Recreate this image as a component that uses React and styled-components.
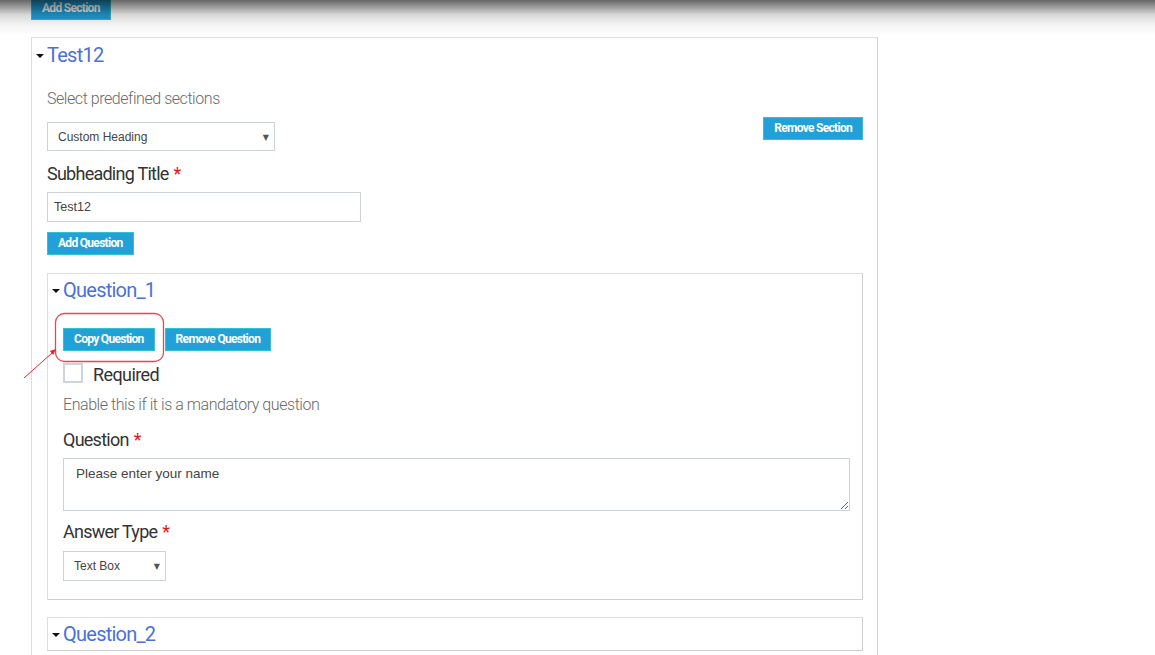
import React from "react";
import styled, { createGlobalStyle } from "styled-components";

const Global = createGlobalStyle`
  html, body { margin: 0; padding: 0; background: #fff; }
  body { font-family: Roboto, "Liberation Sans", sans-serif; color: #333; }
  * { box-sizing: border-box; }
`;

const TopShade = styled.div`
  position: fixed;
  top: 0;
  left: 0;
  right: 0;
  height: 36px;
  pointer-events: none;
  z-index: 10;
  background: linear-gradient(
    to bottom,
    rgba(0, 0, 0, 0.6) 0px,
    rgba(0, 0, 0, 0.42) 6px,
    rgba(0, 0, 0, 0.15) 15px,
    rgba(0, 0, 0, 0.04) 26px,
    rgba(0, 0, 0, 0) 35px
  );
`;

const Page = styled.div`
  margin-top: -3px;
  padding-left: 31px;
  width: 878px;
  display: flex;
  flex-direction: column;
  align-items: flex-start;
`;

const Button = styled.button`
  height: 23px;
  padding: 0 ${(p) => p.$pad || 10}px;
  background: #22a0d8;
  border: 1px solid #34bfd2;
  color: #fff;
  font-family: Roboto, sans-serif;
  font-weight: 700;
  font-size: 12px;
  letter-spacing: -0.7px;
  line-height: 21px;
  cursor: pointer;
  white-space: nowrap;
`;

const Box = styled.div`
  align-self: stretch;
  border: 1px solid #dedede;
  border-right-color: #cfcfcf;
  border-bottom-color: #cfcfcf;
  padding: 0 ${(p) => p.$padRight}px ${(p) => p.$padBottom}px 15px;
  margin-top: ${(p) => p.$top}px;
  display: flex;
  flex-direction: column;
  align-items: flex-start;
`;

const Header = styled.div`
  display: flex;
  align-items: center;
  margin-left: -11px;
  height: ${(p) => p.$h}px;
`;

const Caret = styled.span`
  width: 0;
  height: 0;
  border-left: 4px solid transparent;
  border-right: 4px solid transparent;
  border-top: 4px solid #111;
  margin-right: 3px;
  margin-top: 1px;
`;

const Title = styled.span`
  font-size: 20px;
  line-height: 26px;
  color: #4b6fdb;
  letter-spacing: -0.75px;
`;

const TopRow = styled.div`
  align-self: stretch;
  display: flex;
  justify-content: space-between;
  align-items: flex-start;
  margin-top: 16px;
`;

const Col = styled.div`
  display: flex;
  flex-direction: column;
  align-items: flex-start;
`;

const Hint = styled.div`
  font-size: 16px;
  font-weight: 300;
  line-height: 22px;
  color: #6a6a6a;
  letter-spacing: -0.45px;
  margin-top: ${(p) => p.$top || 0}px;
`;

const Label = styled.div`
  font-size: 18px;
  line-height: 24px;
  color: #333;
  letter-spacing: -0.75px;
  margin-top: ${(p) => p.$top}px;
  span {
    color: #e8141b;
    margin-left: 5px;
  }
`;

const SelectWrap = styled.div`
  position: relative;
  width: ${(p) => p.$w}px;
  margin-top: ${(p) => p.$top}px;
`;

const Select = styled.select`
  appearance: none;
  -webkit-appearance: none;
  display: block;
  width: 100%;
  height: ${(p) => p.$h}px;
  border: 1px solid #cdd1da;
  border-radius: 0;
  background: #fff;
  color: #444;
  font-family: "Liberation Sans", Arial, sans-serif;
  font-size: 12px;
  padding: 0 0 0 10px;
  outline: none;
`;

const Arrow = styled.span`
  position: absolute;
  right: 6px;
  top: 50%;
  transform: translateY(-50%);
  font-size: 8px;
  color: #555;
  pointer-events: none;
  font-family: "DejaVu Sans", sans-serif;
`;

const RemoveSection = styled(Button)`
  margin-top: 29px;
`;

const TextInput = styled.input`
  display: block;
  width: 314px;
  height: 30px;
  margin-top: 6px;
  border: 1px solid #cdd1da;
  padding: 0 6px;
  font-family: "Liberation Sans", Arial, sans-serif;
  font-size: 12.5px;
  color: #444;
  outline: none;
`;

const AddQuestion = styled(Button)`
  margin-top: 10px;
`;

const ButtonRow = styled.div`
  position: relative;
  display: flex;
  gap: 10px;
  margin-top: 22px;
`;

const Annotation = styled.svg`
  position: absolute;
  left: -45px;
  top: -20px;
  overflow: visible;
  pointer-events: none;
`;

const CheckRow = styled.label`
  display: flex;
  align-items: flex-start;
  gap: 10px;
  height: 20px;
  margin-top: 12px;
  font-size: 18px;
  line-height: 20px;
  letter-spacing: -0.6px;
  color: #333;
`;

const CheckText = styled.span`
  padding-top: 2px;
`;

const CheckBoxSquare = styled.span`
  flex: none;
  width: 20px;
  height: 20px;
  border: 2px solid #cfd3db;
  background: #fff;
`;

const TextArea = styled.textarea`
  display: block;
  align-self: stretch;
  height: 53px;
  margin-top: 6px;
  border: 1px solid #cdd1da;
  padding: 7px 12px;
  font-family: "Liberation Sans", Arial, sans-serif;
  font-size: 13.5px;
  color: #444;
  resize: vertical;
  outline: none;
`;

function SelectField({ w, h, top, value }) {
  return (
    <SelectWrap $w={w} $top={top}>
      <Select $h={h} defaultValue={value}>
        <option>{value}</option>
      </Select>
      <Arrow>▼</Arrow>
    </SelectWrap>
  );
}

export default function App() {
  return (
    <>
      <Global />
      <TopShade />
      <Page>
        <Button $pad={10}>Add Section</Button>
        <Box $top={17} $padRight={14} $padBottom={40}>
          <Header $h={34}>
            <Caret />
            <Title>Test12</Title>
          </Header>
          <TopRow>
            <Col>
              <Hint>Select predefined sections</Hint>
              <SelectField w={228} h={29} top={12} value="Custom Heading" />
            </Col>
            <RemoveSection $pad={10}>Remove Section</RemoveSection>
          </TopRow>
          <Label $top={11}>
            Subheading Title<span>*</span>
          </Label>
          <TextInput defaultValue="Test12" />
          <AddQuestion $pad={10}>Add Question</AddQuestion>

          <Box $top={18} $padRight={12} $padBottom={18}>
            <Header $h={32}>
              <Caret />
              <Title>Question_1</Title>
            </Header>
            <ButtonRow>
              <Button $pad={10}>Copy Question</Button>
              <Button $pad={10}>Remove Question</Button>
              <Annotation width="160" height="80" viewBox="0 0 160 80">
                <rect x="37.5" y="5.5" width="108" height="48" rx="9" fill="none" stroke="#e8464b" strokeWidth="1.3" />
                <line x1="6" y1="70" x2="34" y2="45" stroke="#e8262b" strokeWidth="1" />
                <polygon points="38,41 35.2,46.9 31.8,43.1" fill="#e8262b" />
              </Annotation>
            </ButtonRow>
            <CheckRow>
              <CheckBoxSquare />
              <CheckText>Required</CheckText>
            </CheckRow>
            <Hint $top={11}>Enable this if it is a mandatory question</Hint>
            <Label $top={12}>
              Question<span>*</span>
            </Label>
            <TextArea defaultValue="Please enter your name" />
            <Label $top={9}>
              Answer Type<span>*</span>
            </Label>
            <SelectField w={103} h={30} top={7} value="Text Box" />
          </Box>

          <Box $top={17} $padRight={12} $padBottom={0}>
            <Header $h={32}>
              <Caret />
              <Title>Question_2</Title>
            </Header>
          </Box>
        </Box>
      </Page>
    </>
  );
}
